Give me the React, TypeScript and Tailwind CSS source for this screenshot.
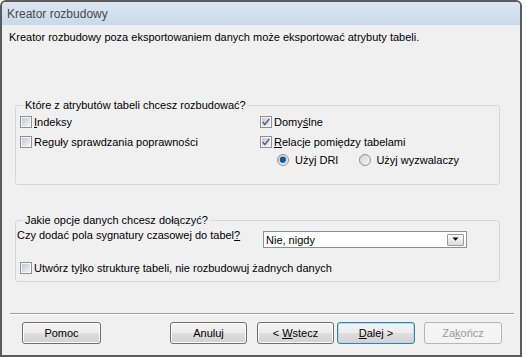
import type { ReactNode } from "react";

const font = "font-['Liberation_Sans',Arial,sans-serif]";

function CheckBox({ checked }: { checked?: boolean }) {
  return (
    <svg width="12" height="12" viewBox="0 0 12 12" className="shrink-0">
      <defs>
        <linearGradient id="cbg" x1="0" y1="0" x2="1" y2="1">
          <stop offset="0" stopColor="#c4c8ce" />
          <stop offset="1" stopColor="#f3f3f3" />
        </linearGradient>
      </defs>
      <rect x="0.5" y="0.5" width="11" height="11" fill="#f6f6f6" stroke="#8f8f8f" />
      <rect x="2" y="2" width="8" height="8" fill="url(#cbg)" />
      {checked && (
        <path d="M2.7 6.1 L4.8 8.5 L9.3 3.1" fill="none" stroke="#4d6797" strokeWidth="1.5" />
      )}
    </svg>
  );
}

function Radio({ checked }: { checked?: boolean }) {
  return (
    <svg width="12" height="12" viewBox="0 0 12 12" className="shrink-0">
      <defs>
        <linearGradient id="rbg" x1="0" y1="0" x2="1" y2="1">
          <stop offset="0" stopColor="#cfd2d6" />
          <stop offset="1" stopColor="#f7f7f7" />
        </linearGradient>
        <radialGradient id="rdot" cx="0.45" cy="0.4" r="0.6">
          <stop offset="0" stopColor="#1b5fae" />
          <stop offset="0.6" stopColor="#174d8f" />
          <stop offset="1" stopColor="#8cc0ea" />
        </radialGradient>
      </defs>
      <circle cx="6" cy="6" r="5.5" fill="url(#rbg)" stroke="#8f8f8f" />
      {checked && <circle cx="6" cy="6" r="3.4" fill="url(#rdot)" />}
    </svg>
  );
}

function CheckRow({ checked, children }: { checked?: boolean; children: ReactNode }) {
  return (
    <div className="flex items-center h-[20px] gap-[2px]">
      <CheckBox checked={checked} />
      <span>{children}</span>
    </div>
  );
}

function Btn({
  children,
  w,
  kind = "normal",
}: {
  children: ReactNode;
  w: string;
  kind?: "normal" | "default" | "disabled";
}) {
  const styles = {
    normal:
      "border-[#707070] text-black bg-[linear-gradient(to_bottom,#f4f4f4_0%,#ececec_50%,#dedede_50%,#d2d2d2_100%)] shadow-[inset_0_0_0_1px_#fbfbfb]",
    default:
      "border-[#3c7fb1] text-black bg-[linear-gradient(to_bottom,#f4f4f4_0%,#ececec_50%,#dedede_50%,#d2d2d2_100%)] shadow-[inset_0_0_0_1px_#a9dcf6]",
    disabled: "border-[#b3b7ba] text-[#9a9a9a] bg-[#f4f4f4]",
  };
  return (
    <div
      className={`${w} h-[22px] rounded-[3px] border flex items-center justify-center ${styles[kind]}`}
    >
      {children}
    </div>
  );
}

export default function App() {
  return (
    <div className={`w-[526px] h-[357px] bg-white ${font} text-[11px] leading-[14px] text-black`}>
      <div className="w-[522px] h-[357px] border-2 border-[#5a5a5a] rounded-t-[6px] overflow-hidden flex flex-col bg-[#f0f0f0]">
        {/* title bar */}
        <div className="h-[24px] shrink-0 flex items-center pl-[5px] bg-[linear-gradient(to_bottom,#dbe6f1,#c9d9ea)] border-b border-[#eef3f8]">
          <span className="text-[12px] text-[#4a4a4a]">Kreator rozbudowy</span>
        </div>

        {/* header text */}
        <div className="pt-[4px] pl-[7px]">
          Kreator rozbudowy poza eksportowaniem danych może eksportować atrybuty tabeli.
        </div>

        {/* group 1 */}
        <fieldset className="ml-[13px] mt-[55px] w-[485px] border border-[#d5d8db] rounded-[3px] pl-[4px] pt-[1px] pb-[17px]">
          <legend className="ml-[3px] px-[2px] leading-[12px]">
            Które z atrybutów tabeli chcesz rozbudować?
          </legend>
          <div className="grid grid-cols-[240px_1fr]">
            <div className="flex flex-col">
              <CheckRow>
                <span className="underline">I</span>ndeksy
              </CheckRow>
              <CheckRow>Reguły sprawdzania poprawności</CheckRow>
            </div>
            <div className="flex flex-col">
              <CheckRow checked>
                Domy<span className="underline">ś</span>lne
              </CheckRow>
              <CheckRow checked>
                <span className="underline">R</span>elacje pomiędzy tabelami
              </CheckRow>
            </div>
          </div>
          <div className="flex items-center h-[14px] mt-[1px] pl-[257px]">
            <div className="flex items-center gap-[6px]">
              <Radio checked />
              <span>Użyj DRI</span>
            </div>
            <div className="flex items-center gap-[5px] ml-[21px]">
              <Radio />
              <span>Użyj wyzwalaczy</span>
            </div>
          </div>
        </fieldset>

        {/* group 2 */}
        <fieldset className="ml-[13px] mt-[29px] w-[485px] border border-[#d5d8db] rounded-[3px] pl-[4px] pt-[5px] pb-[3px]">
          <legend className="ml-[3px] px-[2px] leading-[12px]">
            Jakie opcje danych chcesz dołączyć?
          </legend>
          <div className="flex items-start h-[17px]">
            <span className="w-[246px] -ml-[3px] -mt-[3px]">
              Czy dodać pola sygnatury czasowej do tabel<span className="underline">?</span>
            </span>
            <div className="w-[204px] h-[17px] border border-[#8a8f96] bg-white flex items-center pl-[2px]">
              <span className="flex-1">Nie, nigdy</span>
              <div className="w-[17px] h-[12px] mr-[2px] border border-[#9c9c9c] rounded-[1px] bg-[linear-gradient(to_bottom,#fbfbfb,#dcdcdc)] flex items-center justify-center">
                <svg width="7" height="5" viewBox="0 0 7 5">
                  <path d="M0.5 0.5 H6.5 L3.5 3.8 Z" fill="#000" />
                </svg>
              </div>
            </div>
          </div>
          <div className="mt-[10px]">
            <CheckRow>
              Utwórz ty<span className="underline">l</span>ko strukturę tabeli, nie rozbudowuj żadnych danych
            </CheckRow>
          </div>
        </fieldset>

        {/* separator */}
        <div className="ml-[8px] mt-[31px] w-[504px] h-[2px] border-t border-[#a0a0a0] border-b border-b-white" />

        {/* buttons */}
        <div className="flex mt-[7px] pl-[20px]">
          <Btn w="w-[79px]">Pomoc</Btn>
          <div className="ml-[69px]">
            <Btn w="w-[77px]">Anuluj</Btn>
          </div>
          <div className="ml-[10px]">
            <Btn w="w-[77px]">
              &lt; <span className="underline ml-[3px]">W</span>stecz
            </Btn>
          </div>
          <div className="ml-[3px]">
            <Btn w="w-[78px]" kind="default">
              <span className="underline">D</span>alej &gt;
            </Btn>
          </div>
          <div className="ml-[9px]">
            <Btn w="w-[78px]" kind="disabled">
              Za<span className="underline">k</span>ończ
            </Btn>
          </div>
        </div>
      </div>
    </div>
  );
}
